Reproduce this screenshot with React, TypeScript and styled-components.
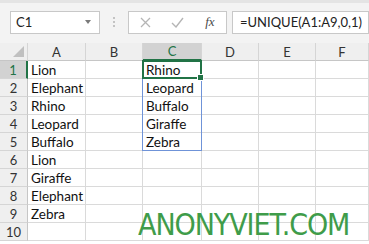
import React from "react";
import styled, { createGlobalStyle } from "styled-components";

const GlobalStyle = createGlobalStyle`
  html, body {
    margin: 0;
    padding: 0;
    background: #ffffff;
  }
  body {
    font-family: "Lato", "Open Sans", sans-serif;
    overflow: hidden;
  }
`;

const Page = styled.div`
  position: relative;
  width: 369px;
  height: 244px;
  overflow: hidden;
  background: #ffffff;
`;

const Toolbar = styled.div`
  height: 43px;
  border-top: 3px solid #e4e4e4;
  background: #f3f3f3;
  display: flex;
  align-items: center;
  padding-left: 10px;
  padding-bottom: 2px;
  box-sizing: border-box;
`;

const Field = styled.div<{ $w?: number }>`
  height: 23px;
  box-sizing: border-box;
  background: #ffffff;
  border: 1px solid #c8c8c8;
  display: flex;
  align-items: center;
  ${(p) => (p.$w ? `width: ${p.$w}px;` : "flex: 1;")}
`;

const NameText = styled.span`
  flex: 1;
  padding-left: 5px;
  font-size: 13px;
  color: #222;
`;

const Caret = styled.span`
  width: 0;
  height: 0;
  margin-right: 8px;
  border-left: 3px solid transparent;
  border-right: 3px solid transparent;
  border-top: 4px solid #7a7a7a;
`;

const Dots = styled.div`
  width: 28px;
  display: flex;
  flex-direction: column;
  align-items: center;
  gap: 2px;
  span {
    width: 2px;
    height: 2px;
    background: #c3c3c3;
  }
`;

const FuncBtn = styled.span`
  width: 33px;
  display: flex;
  justify-content: center;
`;

const Fx = styled.span`
  font-family: "Liberation Serif", serif;
  font-style: italic;
  font-size: 13px;
  color: #4a4a4a;
`;

const FormulaText = styled.span`
  padding-left: 7px;
  font-size: 13px;
  color: #222;
  white-space: nowrap;
`;

const Gap = styled.div`
  width: 5px;
`;

const Grid = styled.div`
  display: grid;
  grid-template-columns: 28px 58px 57px 59px 57px 57px 1fr;
  grid-template-rows: repeat(11, 18px);
`;

const Corner = styled.div`
  background: #efefef;
  border-right: 1px solid #d5d5d5;
  border-bottom: 1px solid #c6c6c6;
  position: relative;
  &::after {
    content: "";
    position: absolute;
    right: 3px;
    bottom: 3px;
    border-left: 11px solid transparent;
    border-bottom: 11px solid #c0c0c0;
  }
`;

const ColHead = styled.div<{ $sel?: boolean }>`
  background: ${(p) => (p.$sel ? "#d2d2d2" : "#efefef")};
  border-right: 1px solid #d5d5d5;
  border-bottom: ${(p) => (p.$sel ? "2px solid #217346" : "1px solid #c6c6c6")};
  display: flex;
  align-items: center;
  justify-content: center;
  font-size: 13px;
  color: ${(p) => (p.$sel ? "#217346" : "#333")};
`;

const RowHead = styled.div<{ $sel?: boolean }>`
  background: ${(p) => (p.$sel ? "#d2d2d2" : "#efefef")};
  border-right: ${(p) => (p.$sel ? "2px solid #217346" : "1px solid #c6c6c6")};
  border-bottom: 1px solid #d5d5d5;
  display: flex;
  align-items: center;
  justify-content: center;
  font-size: 13px;
  color: ${(p) => (p.$sel ? "#217346" : "#333")};
`;

const Cell = styled.div<{ $anchor?: boolean }>`
  ${(p) => (p.$anchor ? "position: relative;" : "")}
  border-right: 1px solid #dadada;
  border-bottom: 1px solid #dadada;
  display: flex;
  align-items: center;
  padding-left: 3px;
  font-size: 13.5px;
  color: #111;
  white-space: nowrap;
`;

const SpillRange = styled.div`
  position: absolute;
  z-index: 1;
  left: -1px;
  top: -1px;
  width: 60px;
  height: 91px;
  box-sizing: border-box;
  border: 1px solid #6f93d8;
  pointer-events: none;
`;

const ActiveCell = styled.div`
  position: absolute;
  z-index: 2;
  left: -1px;
  top: -1px;
  width: 60px;
  height: 19px;
  box-sizing: border-box;
  border: 2px solid #217346;
  pointer-events: none;
  &::after {
    content: "";
    position: absolute;
    right: -4px;
    bottom: -4px;
    width: 5px;
    height: 5px;
    background: #217346;
    border: 1px solid #ffffff;
  }
`;

const Watermark = styled.div`
  position: absolute;
  z-index: 3;
  left: 138px;
  top: 207px;
  font-family: "DejaVu Sans", sans-serif;
  font-size: 30px;
  letter-spacing: -1.2px;
  color: #3f9c4a;
  white-space: nowrap;
  transform: scaleX(0.9);
  transform-origin: left top;
`;

const colA = ["Lion", "Elephant", "Rhino", "Leopard", "Buffalo", "Lion", "Giraffe", "Elephant", "Zebra", ""];
const colC = ["Rhino", "Leopard", "Buffalo", "Giraffe", "Zebra", "", "", "", "", ""];
const cols = ["A", "B", "C", "D", "E", "F"];

export default function App() {
  return (
    <Page>
      <GlobalStyle />
      <Toolbar>
        <Field $w={90}>
          <NameText>C1</NameText>
          <Caret />
        </Field>
        <Dots>
          <span />
          <span />
          <span />
        </Dots>
        <Field $w={99}>
          <FuncBtn>
            <svg width="11" height="11" viewBox="0 0 11 11">
              <path d="M1 1L10 10M10 1L1 10" stroke="#b5b5b5" strokeWidth="1.3" />
            </svg>
          </FuncBtn>
          <FuncBtn>
            <svg width="13" height="11" viewBox="0 0 13 11">
              <path d="M1 6L5 10L12 1" stroke="#b5b5b5" strokeWidth="1.4" fill="none" />
            </svg>
          </FuncBtn>
          <FuncBtn>
            <Fx>fx</Fx>
          </FuncBtn>
        </Field>
        <Gap />
        <Field>
          <FormulaText>=UNIQUE(A1:A9,0,1)</FormulaText>
        </Field>
      </Toolbar>
      <Grid>
        <Corner />
        {cols.map((c) => (
          <ColHead key={c} $sel={c === "C"}>
            {c}
          </ColHead>
        ))}
        {colA.map((a, i) => (
          <React.Fragment key={i}>
            <RowHead $sel={i === 0}>{i + 1}</RowHead>
            <Cell>{a}</Cell>
            <Cell />
            <Cell $anchor={i === 0}>
              {colC[i]}
              {i === 0 && (
                <>
                  <SpillRange />
                  <ActiveCell />
                </>
              )}
            </Cell>
            <Cell />
            <Cell />
            <Cell />
          </React.Fragment>
        ))}
      </Grid>
      <Watermark>ANONYVIET.COM</Watermark>
    </Page>
  );
}
